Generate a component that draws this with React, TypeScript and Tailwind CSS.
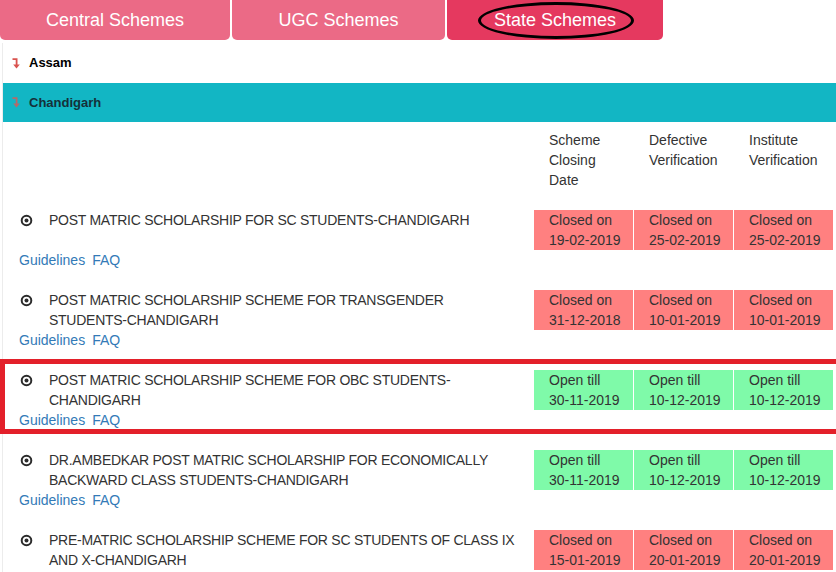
import React from "react";

type Cell = { label: string; date: string; open: boolean };
type Row = { title: string[]; cells: Cell[] };

const closed = (d: string): Cell => ({ label: "Closed on", date: d, open: false });
const open = (d: string): Cell => ({ label: "Open till", date: d, open: true });

const rows: Row[] = [
  {
    title: ["POST MATRIC SCHOLARSHIP FOR SC STUDENTS-CHANDIGARH"],
    cells: [closed("19-02-2019"), closed("25-02-2019"), closed("25-02-2019")],
  },
  {
    title: ["POST MATRIC SCHOLARSHIP SCHEME FOR TRANSGENDER", "STUDENTS-CHANDIGARH"],
    cells: [closed("31-12-2018"), closed("10-01-2019"), closed("10-01-2019")],
  },
  {
    title: ["POST MATRIC SCHOLARSHIP SCHEME FOR OBC STUDENTS-", "CHANDIGARH"],
    cells: [open("30-11-2019"), open("10-12-2019"), open("10-12-2019")],
  },
  {
    title: ["DR.AMBEDKAR POST MATRIC SCHOLARSHIP FOR ECONOMICALLY", "BACKWARD CLASS STUDENTS-CHANDIGARH"],
    cells: [open("30-11-2019"), open("10-12-2019"), open("10-12-2019")],
  },
  {
    title: ["PRE-MATRIC SCHOLARSHIP SCHEME FOR SC STUDENTS OF CLASS IX", "AND X-CHANDIGARH"],
    cells: [closed("15-01-2019"), closed("20-01-2019"), closed("20-01-2019")],
  },
];

function LevelDown({ color }: { color: string }) {
  return (
    <svg width="8" height="11" viewBox="0 0 8 11" className="shrink-0">
      <path d="M0.5 1.2 H4.6 V7" stroke={color} strokeWidth="1.8" fill="none" />
      <path d="M1.2 6.4 H7.8 L4.5 10.6 Z" fill={color} />
    </svg>
  );
}

function Record() {
  return (
    <svg width="13" height="13" viewBox="0 0 13 13" className="shrink-0">
      <circle cx="6.5" cy="6.5" r="4.8" stroke="#2b2b2b" strokeWidth="2" fill="none" />
      <circle cx="6.5" cy="6.5" r="2" fill="#2b2b2b" />
    </svg>
  );
}

function Tab({ label, active, w }: { label: string; active?: boolean; w: string }) {
  return (
    <div
      className={`relative flex h-[40px] items-center justify-center rounded-b-[5px] text-[18px] text-white ${w} ${
        active ? "bg-[#e5395f]" : "bg-[#eb6a86]"
      }`}
    >
      <span className="pb-[1px]">{label}</span>
      {active && (
        <span className="pointer-events-none absolute left-[31px] top-[2px] h-[37px] w-[156px] rounded-[50%] border-[3px] border-black" />
      )}
    </div>
  );
}

export default function App() {
  return (
    <div
      className="h-[572px] w-[836px] overflow-hidden bg-white text-[14px] leading-[20px] text-[#333]"
      style={{ fontFamily: '"Liberation Sans", Arial, sans-serif' }}
    >
      <div className="flex gap-[2px]">
        <Tab label="Central Schemes" w="w-[230px]" />
        <Tab label="UGC Schemes" w="w-[213px]" />
        <Tab label="State Schemes" w="w-[216px]" active />
      </div>

      <div className="ml-[2px] border-l border-[#ececec]">
        <div className="mt-[3px] flex h-[40px] items-center gap-[9px] pl-[9px] text-[13px] font-bold text-black">
          <LevelDown color="#d9534f" />
          <span>Assam</span>
        </div>
        <div className="flex h-[39px] items-center gap-[9px] bg-[#12b6c4] pl-[9px] text-[13px] font-bold text-[#15303a]">
          <LevelDown color="#b46a6a" />
          <span>Chandigarh</span>
        </div>

        <div className="flex pt-[8px]">
          <div className="w-[531px]" />
          <div className="w-[100px] pl-[15px]">
            Scheme
            <br />
            Closing
            <br />
            Date
          </div>
          <div className="w-[100px] pl-[15px]">
            Defective
            <br />
            Verification
          </div>
          <div className="w-[100px] pl-[15px]">
            Institute
            <br />
            Verification
          </div>
        </div>

        <div className="mt-[19px] flex flex-col">
          {rows.map((r, i) => (
            <div key={i} className="relative pt-[1px] pb-[19px]">
              {i === 2 && (
                <span className="pointer-events-none absolute -left-[3px] -right-[10px] -top-[10px] h-[75px] border-[5px] border-[#e3202a]" />
              )}
              <div className="flex">
                <div className="flex w-[531px] pl-[16px]">
                  <div className="flex w-[30px] pt-[4px] pl-[1px]">
                    <Record />
                  </div>
                  <div className="w-[485px] tracking-[-0.26px]">
                    {r.title.map((l, k) => (
                      <div key={k} className="whitespace-nowrap">
                        {l}
                      </div>
                    ))}
                  </div>
                </div>
                {r.cells.map((c, j) => (
                  <div
                    key={j}
                    className={`h-[40px] w-[99px] pl-[15px] mr-[1px] ${c.open ? "bg-[#7ffaa9]" : "bg-[#ff8080]"}`}
                  >
                    {c.label}
                    <br />
                    {c.date}
                  </div>
                ))}
              </div>
              <div className="flex gap-[7px] pl-[16px] text-[#337ab7]">
                <span>Guidelines</span>
                <span>FAQ</span>
              </div>
            </div>
          ))}
        </div>
      </div>
    </div>
  );
}
